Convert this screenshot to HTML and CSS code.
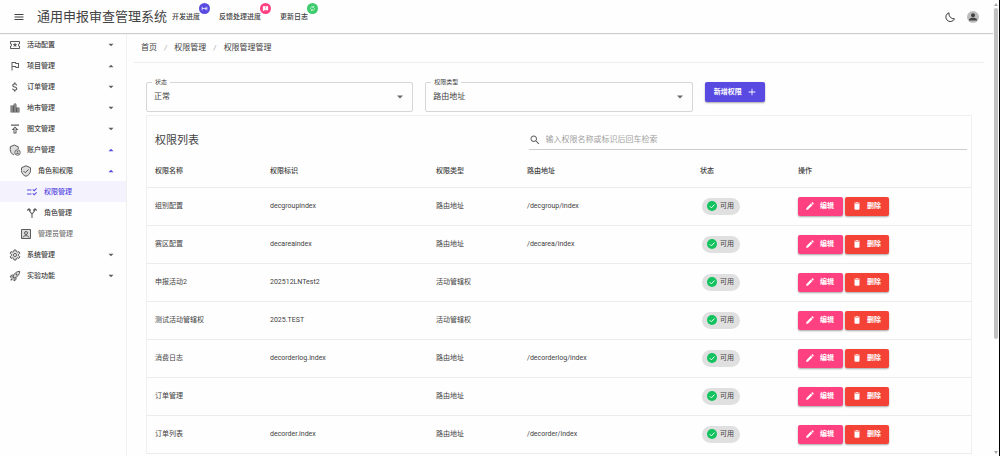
FILE: index.html
```html
<!DOCTYPE html>
<html lang="zh-CN">
<head>
<meta charset="utf-8">
<title>通用申报审查管理系统</title>
<link rel="stylesheet" href="styles.css">
</head>
<body>
<svg class="sprite" aria-hidden="true">
  <symbol id="i-down" viewBox="0 0 24 24"><path d="M6 9l6 6 6-6z"/></symbol>
  <symbol id="i-up" viewBox="0 0 24 24"><path d="M6 15l6-6 6 6z"/></symbol>
  <symbol id="i-edit" viewBox="0 0 24 24"><path d="M3 17.25V21h3.75L17.81 9.94l-3.75-3.75L3 17.25zM20.71 7.04c.39-.39.39-1.02 0-1.41l-2.34-2.34c-.39-.39-1.02-.39-1.41 0l-1.83 1.83 3.75 3.75 1.83-1.83z"/></symbol>
  <symbol id="i-delete" viewBox="0 0 24 24"><path d="M6 19c0 1.1.9 2 2 2h8c1.1 0 2-.9 2-2V7H6v12zM19 4h-3.5l-1-1h-5l-1 1H5v2h14V4z"/></symbol>
  <symbol id="i-check" viewBox="0 0 24 24"><circle cx="12" cy="12" r="12" fill="#12c25e"/><path d="M6.500 12.500l4 4 7.500-8" fill="none" stroke="#fff" stroke-width="2.200"/></symbol>
</svg>
<div class="window">
  <div class="app">
    <header class="topbar">
      <button class="icon-button" type="button" aria-label="菜单"><svg class="icon" viewBox="0 0 24 24"><path d="M3 18h18v-2H3v2zm0-5h18v-2H3v2zm0-7v2h18V6H3z"/></svg></button>
      <h1 class="brand">通用申报审查管理系统</h1>
      <nav class="toplinks" aria-label="快捷入口">
        <a class="toplink" href="#progress">开发进度<span class="badge badge-primary"><svg viewBox="0 0 24 24"><path d="M4 6v12M20 6v12M4 12h14M14 8l4 4-4 4" fill="none" stroke="#fff" stroke-width="2.500"/></svg></span></a>
        <a class="toplink" href="#feedback">反馈处理进度<span class="badge badge-pink"><svg viewBox="0 0 24 24"><path d="M3 4h18v14H7l-4 4z"/><path d="M12 7v4M12 13v2" stroke="#ff4081" stroke-width="2"/></svg></span></a>
        <a class="toplink" href="#changelog">更新日志<span class="badge badge-green"><svg viewBox="0 0 24 24"><path d="M5 13a7 7 0 0 1 11-6M19 11a7 7 0 0 1-11 6M16 3v5h-5M8 21v-5h5" fill="none" stroke="#fff" stroke-width="2"/></svg></span></a>
      </nav>
      <div class="tools">
        <button class="icon-button" type="button" aria-label="深色模式"><svg class="icon" viewBox="0 0 24 24"><path d="M10 3.500a9 9 0 1 0 11 12A10 10 0 0 1 10 3.500z" fill="none" stroke="currentColor" stroke-width="2"/></svg></button>
        <button class="icon-button avatar" type="button" aria-label="用户"><svg class="icon" viewBox="0 0 24 24"><circle cx="12" cy="8.500" r="4"/><path d="M4 19v-1.500c0-2.700 5.300-4 8-4s8 1.300 8 4V19z"/></svg></button>
      </div>
    </header>
    <div class="body">
      <nav class="sidebar" aria-label="主导航">
        <a class="nav" href="#a"><svg class="icon" viewBox="0 0 24 24"><path d="M22 10V6c0-1.110-.9-2-2-2H4c-1.100 0-1.990.89-1.990 2v4c1.100 0 1.990.9 1.990 2s-.89 2-2 2v4c0 1.100.9 2 2 2h16c1.100 0 2-.9 2-2v-4c-1.100 0-2-.9-2-2s.9-2 2-2zm-2-1.460c-1.190.69-2 1.990-2 3.460s.81 2.770 2 3.460V18H4v-2.540c1.190-.69 2-1.990 2-3.460 0-1.480-.8-2.770-1.990-3.460L4 6h16v2.540zM9.070 16L12 14.120 14.930 16l-.89-3.360 2.690-2.200-3.470-.21L12 7l-1.270 3.220-3.470.21 2.690 2.200z"/></svg><span>活动配置</span><svg class="icon caret"><use href="#i-down"/></svg></a>
        <a class="nav" href="#b"><svg class="icon" viewBox="0 0 24 24"><path d="M12.360 6l.4 2H18v6h-3.360l-.4-2H7V6h5.360M14 4H5v17h2v-7h5.600l.4 2h7V6h-5.600L14 4z"/></svg><span>项目管理</span><svg class="icon caret"><use href="#i-up"/></svg></a>
        <a class="nav" href="#c"><svg class="icon" viewBox="0 0 24 24"><path d="M11.800 10.900c-2.270-.59-3-1.200-3-2.150 0-1.090 1.010-1.850 2.700-1.850 1.780 0 2.440.85 2.500 2.100h2.210c-.07-1.720-1.120-3.300-3.210-3.810V3h-3v2.160c-1.940.42-3.500 1.680-3.500 3.610 0 2.310 1.910 3.460 4.700 4.130 2.500.6 3 1.480 3 2.410 0 .69-.49 1.790-2.700 1.790-2.060 0-2.870-.92-2.980-2.100h-2.200c.12 2.190 1.760 3.420 3.680 3.830V21h3v-2.150c1.950-.37 3.500-1.500 3.500-3.550 0-2.840-2.430-3.810-4.700-4.400z"/></svg><span>订单管理</span><svg class="icon caret"><use href="#i-down"/></svg></a>
        <a class="nav" href="#d"><svg class="icon" viewBox="0 0 24 24"><path d="M15 11V5l-3-3-3 3v2H3v14h18V11h-6zm-8 8H5v-2h2v2zm0-4H5v-2h2v2zm0-4H5V9h2v2zm6 8h-2v-2h2v2zm0-4h-2v-2h2v2zm0-4h-2V9h2v2zm0-4h-2V5h2v2zm6 12h-2v-2h2v2zm0-4h-2v-2h2v2z"/></svg><span>地市管理</span><svg class="icon caret"><use href="#i-down"/></svg></a>
        <a class="nav" href="#e"><svg class="icon" viewBox="0 0 24 24"><path d="M4 3h16v2.500H4zm1 11h4v7h6v-7h4l-7-7-7 7zm8-2v7h-2v-7H9.830L12 9.830 14.170 12H13z"/></svg><span>图文管理</span><svg class="icon caret"><use href="#i-down"/></svg></a>
        <a class="nav" href="#f"><svg class="icon" viewBox="0 0 24 24"><path d="M10 22C5 20 2.500 15.500 2.500 11V5.500L10.500 2l8 3.500V10" fill="#ddd" stroke="currentColor" stroke-width="2"/><circle cx="17" cy="17" r="5.500" fill="#ddd" stroke="currentColor" stroke-width="1.800"/><circle cx="17" cy="15.500" r="1.500"/><path d="M14 19.500c0-2.500 6-2.500 6 0z"/></svg><span>账户管理</span><svg class="icon caret caret-open"><use href="#i-up"/></svg></a>
        <a class="nav nav-2" href="#g"><svg class="icon" viewBox="0 0 24 24"><path d="M12 1.500l9 4V11c0 5.500-3.800 10.200-9 11.500C6.800 21.200 3 16.500 3 11V5.500z" fill="#ddd" stroke="currentColor" stroke-width="2"/><path d="M7 12l3.500 3.500L17 9" fill="none" stroke="currentColor" stroke-width="2"/></svg><span>角色和权限</span><svg class="icon caret caret-open"><use href="#i-up"/></svg></a>
        <a class="nav nav-3 nav-active" href="#h" aria-current="page"><svg class="icon" viewBox="0 0 24 24"><path d="M11 7H2v2h9V7zm0 8H2v2h9v-2zm5.340-4l-3.540-3.540 1.410-1.410 2.120 2.120 4.240-4.240L22 5.340 16.340 11zm0 8l-3.540-3.540 1.410-1.410 2.120 2.120 4.240-4.240L22 13.340 16.340 19z"/></svg><span>权限管理</span></a>
        <a class="nav nav-3" href="#i"><svg class="icon" viewBox="0 0 24 24"><path d="M12 22v-7c0-4-6-4-6-11M12 15c0-4 6-4 6-11M2.500 7L6 3.500 9.500 7M14.500 7L18 3.500 21.500 7" fill="none" stroke="currentColor" stroke-width="2.200"/></svg><span>角色管理</span></a>
        <a class="nav nav-2 nav-soft" href="#j"><svg class="icon" viewBox="0 0 24 24"><path d="M3 3h18v18H3z" fill="#ddd" stroke="currentColor" stroke-width="2"/><circle cx="12" cy="10" r="3" fill="none" stroke="currentColor" stroke-width="2"/><path d="M6 19c1-5 11-5 12 0" fill="none" stroke="currentColor" stroke-width="2"/></svg><span>管理员管理</span></a>
        <a class="nav" href="#k"><svg class="icon" viewBox="0 0 24 24"><path d="M10 2h4l.6 3.200 2 1.100 3-1.200 2 3.500-2.500 2.100v2.600l2.500 2.100-2 3.500-3-1.200-2 1.100L14 22h-4l-.6-3.200-2-1.100-3 1.200-2-3.500 2.500-2.100v-2.600L2.400 8.600l2-3.500 3 1.200 2-1.100z" fill="#ddd" stroke="currentColor" stroke-width="2"/><circle cx="12" cy="12" r="3" fill="#fff" stroke="currentColor" stroke-width="2"/></svg><span>系统管理</span><svg class="icon caret"><use href="#i-down"/></svg></a>
        <a class="nav" href="#l"><svg class="icon" viewBox="0 0 24 24"><path d="M8 14C10 7 14 3 21.500 2.500 21 10 17 14 10 16zM9 10H5l-3 4 6 0M14 15v4l-4 3v-6" fill="#ddd" stroke="currentColor" stroke-width="2"/><circle cx="15" cy="9" r="1.800"/><path d="M3 21c0-3 1-4.500 3-4.500S8 21 3 21z"/></svg><span>实验功能</span><svg class="icon caret"><use href="#i-down"/></svg></a>
      </nav>
      <main class="main">
        <nav class="crumbs" aria-label="面包屑"><a href="#home">首页</a><i>/</i><a href="#perm">权限管理</a><i>/</i><a href="#permission">权限管理管理</a></nav>
        <div class="content">
          <form class="filters">
            <div class="field"><label for="status">状态</label><select id="status"><option>正常</option></select><svg class="icon"><use href="#i-down"/></svg></div>
            <div class="field"><label for="type">权限类型</label><select id="type"><option>路由地址</option></select><svg class="icon"><use href="#i-down"/></svg></div>
            <div class="action"><button class="btn btn-primary" type="button">新增权限<svg class="glyph" viewBox="0 0 24 24"><path d="M20 13h-7v7h-2v-7H4v-2h7V4h2v7h7v2z"/></svg></button></div>
          </form>
          <section class="card">
            <div class="card-head">
              <h2>权限列表</h2>
              <label class="search"><svg class="icon" viewBox="0 0 24 24"><path d="M15.500 14h-.79l-.28-.27C15.410 12.590 16 11.110 16 9.500 16 5.910 13.090 3 9.500 3S3 5.910 3 9.500 5.910 16 9.500 16c1.610 0 3.090-.59 4.230-1.570l.27.28v.79l5 4.990L20.490 19l-4.990-5zm-6 0C7.010 14 5 11.990 5 9.500S7.010 5 9.500 5 14 7.010 14 9.500 11.990 14 9.500 14z"/></svg><input type="text" placeholder="输入权限名称或标识后回车检索" aria-label="检索权限"></label>
            </div>
            <table>
              <thead><tr><th class="c-name">权限名称</th><th class="c-key">权限标识</th><th class="c-type">权限类型</th><th class="c-path">路由地址</th><th class="c-status">状态</th><th class="c-ops">操作</th></tr></thead>
              <tbody>
                <tr><td>组别配置</td><td>decgroupindex</td><td>路由地址</td><td>/decgroup/index</td><td><span class="chip"><svg class="glyph"><use href="#i-check"/></svg>可用</span></td><td><div class="ops"><button class="btn btn-edit" type="button"><svg class="glyph"><use href="#i-edit"/></svg>编辑</button><button class="btn btn-delete" type="button"><svg class="glyph"><use href="#i-delete"/></svg>删除</button></div></td></tr>
                <tr><td>赛区配置</td><td>decareaindex</td><td>路由地址</td><td>/decarea/index</td><td><span class="chip"><svg class="glyph"><use href="#i-check"/></svg>可用</span></td><td><div class="ops"><button class="btn btn-edit" type="button"><svg class="glyph"><use href="#i-edit"/></svg>编辑</button><button class="btn btn-delete" type="button"><svg class="glyph"><use href="#i-delete"/></svg>删除</button></div></td></tr>
                <tr><td>申报活动2</td><td>202512LNTest2</td><td>活动管辖权</td><td></td><td><span class="chip"><svg class="glyph"><use href="#i-check"/></svg>可用</span></td><td><div class="ops"><button class="btn btn-edit" type="button"><svg class="glyph"><use href="#i-edit"/></svg>编辑</button><button class="btn btn-delete" type="button"><svg class="glyph"><use href="#i-delete"/></svg>删除</button></div></td></tr>
                <tr><td>测试活动管辖权</td><td>2025.TEST</td><td>活动管辖权</td><td></td><td><span class="chip"><svg class="glyph"><use href="#i-check"/></svg>可用</span></td><td><div class="ops"><button class="btn btn-edit" type="button"><svg class="glyph"><use href="#i-edit"/></svg>编辑</button><button class="btn btn-delete" type="button"><svg class="glyph"><use href="#i-delete"/></svg>删除</button></div></td></tr>
                <tr><td>消费日志</td><td>decorderlog.index</td><td>路由地址</td><td>/decorderlog/index</td><td><span class="chip"><svg class="glyph"><use href="#i-check"/></svg>可用</span></td><td><div class="ops"><button class="btn btn-edit" type="button"><svg class="glyph"><use href="#i-edit"/></svg>编辑</button><button class="btn btn-delete" type="button"><svg class="glyph"><use href="#i-delete"/></svg>删除</button></div></td></tr>
                <tr><td>订单管理</td><td></td><td>路由地址</td><td></td><td><span class="chip"><svg class="glyph"><use href="#i-check"/></svg>可用</span></td><td><div class="ops"><button class="btn btn-edit" type="button"><svg class="glyph"><use href="#i-edit"/></svg>编辑</button><button class="btn btn-delete" type="button"><svg class="glyph"><use href="#i-delete"/></svg>删除</button></div></td></tr>
                <tr><td>订单列表</td><td>decorder.index</td><td>路由地址</td><td>/decorder/index</td><td><span class="chip"><svg class="glyph"><use href="#i-check"/></svg>可用</span></td><td><div class="ops"><button class="btn btn-edit" type="button"><svg class="glyph"><use href="#i-edit"/></svg>编辑</button><button class="btn btn-delete" type="button"><svg class="glyph"><use href="#i-delete"/></svg>删除</button></div></td></tr>
              </tbody>
            </table>
          </section>
        </div>
      </main>
    </div>
  </div>
  <div class="scrollbar" aria-hidden="true">
    <svg viewBox="0 0 4 3"><path d="M0 3l2-3 2 3z"/></svg>
    <div class="track"><div class="thumb"></div></div>
    <svg viewBox="0 0 4 3"><path d="M0 0l2 3 2-3z"/></svg>
  </div>
</div>
</body>
</html>
```

FILE: styles.css
```css
* { box-sizing: border-box; }
body {
  margin: 0;
  background: #fefefe;
  color: #424242;
  font: 7px/12px Roboto, "Noto Sans CJK SC", sans-serif;
}
a { color: inherit; text-decoration: none; }
button, input, select { font: inherit; color: inherit; border: 0; padding: 0; margin: 0; background: none; border-radius: 0; }
h1, h2 { margin: 0; font-weight: 400; }
svg { fill: currentColor; display: block; flex: none; }
.sprite { position: absolute; width: 0; height: 0; }
.icon { width: 12px; height: 12px; }
.glyph { width: 10px; height: 10px; }

.window { display: flex; height: 100vh; overflow: hidden; border-right: 1px solid #000; }
.app { flex: 1; min-width: 0; display: flex; flex-direction: column; }

.topbar {
  display: flex;
  align-items: center;
  flex: none;
  height: 33px;
  padding: 0 14px 0 13px;
  box-shadow: 0 1px 1px #ccc;
  z-index: 1;
}
.icon-button { display: flex; }
.brand { margin-left: 12px; font-size: 13px; line-height: 20px; }
.toplinks { display: flex; gap: 19px; margin-left: 5px; font-weight: 500; }
.toplink { position: relative; }
.badge {
  position: absolute;
  left: 100%;
  top: -8px;
  margin-left: -1px;
  width: 11px;
  height: 11px;
  border-radius: 50%;
  display: grid;
  place-items: center;
  color: #fff;
}
.badge svg { width: 7px; height: 7px; }
.badge-primary { background: #594ae2; }
.badge-pink { background: #ff4081; }
.badge-green { background: #3dcb6c; }
.tools { display: flex; gap: 11px; margin-left: auto; }
.avatar { border-radius: 50%; background: #bdbdbd; }

.body { flex: 1; display: flex; min-height: 0; padding-top: 1px; }
.sidebar { flex: none; width: 127px; border-right: 1px solid #f0f0f0; }
.nav {
  display: flex;
  align-items: center;
  gap: 6px;
  height: 21px;
  padding: 0 9px;
  font-weight: 500;
}
.nav .icon { color: #5c5c5c; }
.nav-2 { padding-left: 20px; }
.nav-3 { padding-left: 26px; }
.nav .caret { width: 10px; margin: 0 1px 0 auto; }
.nav .caret-open, .nav-active .icon { color: #594ae2; }
.nav-active { color: #594ae2; background: #f3f2fd; }
.nav-soft { color: #757575; }

.main { flex: 1; min-width: 0; padding: 0 9px 0 7px; }
.crumbs {
  display: flex;
  align-items: center;
  gap: 5px;
  height: 29px;
  padding: 0 7px;
  border-bottom: 1px solid #eee;
  font-size: 8px;
}
.crumbs i { color: #aaa; font-style: normal; padding: 0 2px; }
.content { padding: 19px 12px 0; }

.filters { display: flex; gap: 12px; }
.field { position: relative; flex: 1; height: 30px; }
.action { flex: 1; }
.field select {
  width: 100%;
  height: 30px;
  padding: 0 8px 0 7px;
  border: 1px solid #d6d6d6;
  border-radius: 2px;
  appearance: none;
  font-size: 8px;
}
.field label {
  position: absolute;
  left: 6px;
  top: -4px;
  padding: 0 3px;
  background: #fefefe;
  font-size: 6px;
  line-height: 8px;
}
.field .icon { position: absolute; right: 7px; top: 9px; pointer-events: none; color: #666; }

.btn {
  display: flex;
  align-items: center;
  height: 19px;
  border-radius: 2px;
  color: #fff;
  font-weight: 700;
  box-shadow: 0 1px 2px rgba(0, 0, 0, 0.35);
}
.btn-primary { gap: 5px; padding: 0 8px 0 9px; height: 20px; background: #594ae2; }
.btn-edit { gap: 5px; padding: 0 9px 0 7px; background: #ff4081; }
.btn-delete { gap: 5px; padding: 0 8px 0 7px; background: #f44336; }

.card { margin-top: 3px; border: 1px solid #f0f0f0; border-bottom: 0; }
.card-head { display: flex; align-items: center; justify-content: space-between; height: 40px; padding: 9px 4px 0 8px; }
.card-head h2 { font-size: 11px; line-height: 16px; font-weight: 400; }
.search {
  display: flex;
  align-items: center;
  gap: 5px;
  width: 54%;
  height: 19px;
  border-bottom: 1px solid #ccc;
  color: #616161;
}
.search input { flex: 1; min-width: 0; outline: 0; font-size: 8px; }
.search input::placeholder { color: #a0a0a0; opacity: 1; }

table { width: 100%; border-collapse: collapse; table-layout: fixed; }
th, td { height: 38px; padding: 0 0 0 8px; text-align: left; border-bottom: 1px solid #ececec; font-weight: 400; }
th { height: 31px; font-weight: 500; }
.c-name { width: 115px; }
.c-key { width: 166px; }
.c-type { width: 91px; }
.c-path { width: 173px; }
.c-status { width: 98px; }
.c-ops { width: 182px; }
.chip {
  display: inline-flex;
  align-items: center;
  gap: 3px;
  height: 17px;
  margin-left: 2px;
  padding: 0 6px 0 5px;
  border-radius: 9px;
  background: #e0e0e0;
  vertical-align: middle;
}
.ops { display: flex; gap: 2px; }

.scrollbar { flex: none; width: 6px; padding: 3px 1px 2px; display: flex; flex-direction: column; gap: 2px; color: #aaa; }
.scrollbar svg { width: 4px; height: 3px; }
.track { flex: 1; }
.thumb { height: 75%; border-radius: 2px; background: #c1c1c1; }
```
